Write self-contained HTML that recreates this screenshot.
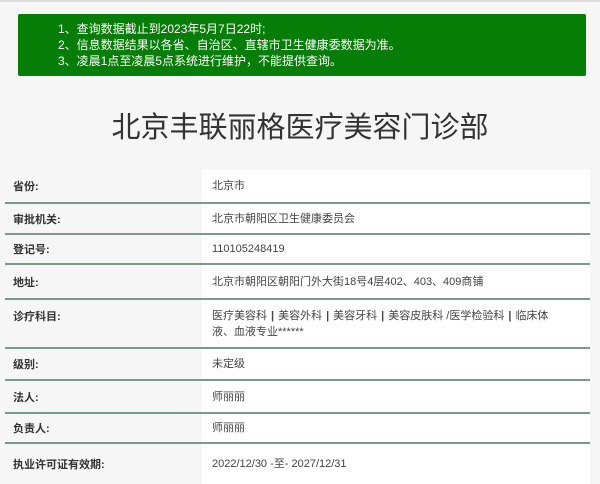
<html><head><style>
body{margin:0;width:600px;height:482px;background:#f6f6f6;font-family:"Liberation Sans","Noto Sans CJK SC",sans-serif;overflow:hidden;position:relative}
.top{position:absolute;left:0;top:0;width:600px;height:2px;background:#ddd}
.g{position:absolute;left:18px;top:14px;width:568px;height:62px;background:#067d06;border-radius:2px;color:#fff;font-size:12px;line-height:16px;box-sizing:border-box;padding:7px 0 0 40px}
h1{position:absolute;top:108px;left:0;width:600px;text-align:center;margin:0;font-weight:normal;font-size:29px;color:#333;line-height:40px}
.t{position:absolute;left:5px;top:170px;width:585px}
.r{display:flex;border-bottom:2px solid #7a9a8c;font-size:11px;color:#444}
.r:last-child{border-bottom:none}
.l{width:197px;flex:none;padding-left:8px;box-sizing:border-box;font-weight:bold;color:#333;display:flex;align-items:center}
.v{flex:1;background:#fff;padding:0 10px;display:flex;align-items:center;line-height:16px}
.s{font-weight:bold;margin:0 4px}
</style></head><body>
<div class="top"></div>
<div class="g">1、查询数据截止到2023年5月7日22时;<br>2、信息数据结果以各省、自治区、直辖市卫生健康委数据为准。<br>3、凌晨1点至凌晨5点系统进行维护，不能提供查询。</div>
<h1>北京丰联丽格医疗美容门诊部</h1>
<div class="t">
<div class="r" style="height:32px"><div class="l">省份:</div><div class="v">北京市</div></div>
<div class="r" style="height:29px"><div class="l">审批机关:</div><div class="v">北京市朝阳区卫生健康委员会</div></div>
<div class="r" style="height:28px"><div class="l">登记号:</div><div class="v">110105248419</div></div>
<div class="r" style="height:33px"><div class="l">地址:</div><div class="v">北京市朝阳区朝阳门外大街18号4层402、403、409商铺</div></div>
<div class="r" style="height:47px"><div class="l" style="align-items:flex-start;padding-top:8px">诊疗科目:</div><div class="v"><div style="white-space:nowrap">医疗美容科<span class="s">|</span>美容外科<span class="s">|</span>美容牙科<span class="s">|</span>美容皮肤科 /医学检验科<span class="s">|</span>临床体<br>液、血液专业******</div></div></div>
<div class="r" style="height:30px"><div class="l">级别:</div><div class="v">未定级</div></div>
<div class="r" style="height:31px"><div class="l">法人:</div><div class="v">师丽丽</div></div>
<div class="r" style="height:28px"><div class="l">负责人:</div><div class="v">师丽丽</div></div>
<div class="r" style="height:40px"><div class="l">执业许可证有效期:</div><div class="v">2022/12/30 -至- 2027/12/31</div></div>
</div>
</body></html>
